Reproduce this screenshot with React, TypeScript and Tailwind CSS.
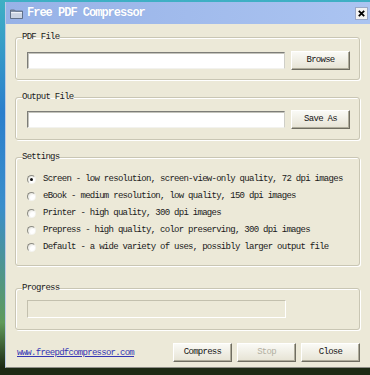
import React from "react";

const mono = "font-['Liberation_Mono',monospace]";

function Btn({ children, disabled, className }: { children: React.ReactNode; disabled?: boolean; className?: string }) {
  return (
    <button
      className={`block h-[19px] w-[59px] shrink-0 border border-t-[#ffffff] border-l-[#ffffff] border-r-[#6f6d61] border-b-[#6f6d61] bg-gradient-to-b from-[#fafaf6] to-[#e6e3d4] shadow-[inset_-1px_-1px_0_#aeab9a] text-[9px] leading-[17px] tracking-[-0.72px] ${mono} ${
        disabled ? "text-[#b3b0a2]" : "text-[#151515]"
      } ${className ?? ""}`}
    >
      {children}
    </button>
  );
}

function Group({ label, children, className }: { label: string; children: React.ReactNode; className?: string }) {
  return (
    <fieldset
      className={`w-[345px] border border-[#c9c6b4] rounded-[3px] shadow-[inset_1px_1px_0_#ffffff,1px_1px_0_#ffffff] ${className ?? ""}`}
    >
      <legend className={`ml-[6px] h-[12px] px-0 text-[9px] leading-[12px] tracking-[-0.72px] text-[#1a1a1a] ${mono}`}>
        {label}
      </legend>
      {children}
    </fieldset>
  );
}

function Radio({ label, checked }: { label: string; checked?: boolean }) {
  return (
    <div className="flex h-[17px] items-center">
      <span className="flex h-[9px] w-[9px] items-center justify-center rounded-full border border-t-[#8c8c84] border-l-[#8c8c84] border-r-[#f4f4f0] border-b-[#f4f4f0] bg-[radial-gradient(circle_at_70%_70%,#ffffff_35%,#d9d8ce_100%)]">
        {checked && <span className="h-[3px] w-[3px] rounded-full bg-[#111]" />}
      </span>
      <span className={`ml-[7px] whitespace-nowrap text-[9px] leading-[17px] tracking-[-0.72px] text-[#1a1a1a] ${mono}`}>
        {label}
      </span>
    </div>
  );
}

function Input() {
  return (
    <div className="h-[17px] w-[258px] shrink-0 border border-t-[#7d7d78] border-l-[#7d7d78] border-r-[#cfcfc8] border-b-[#f2f2ee] bg-white shadow-[inset_1px_1px_0_#c4c4bc]" />
  );
}

function FolderIcon() {
  return (
    <svg width="13" height="11" viewBox="0 0 13 11" className="block shrink-0">
      <path d="M0.5 2 H4.5 L5.5 3 H12.5 V10.5 H0.5 Z" fill="#7f8fa6" stroke="#56647a" strokeWidth="0.8" />
      <path d="M1 4 H12 V10 H1 Z" fill="#c9d3e2" />
      <path d="M1 4 H12 V5.2 H1 Z" fill="#eef2f8" />
    </svg>
  );
}

export default function App() {
  return (
    <div className="h-[375px] w-[370px] overflow-hidden bg-[linear-gradient(180deg,#3fb0c4_0%,#2b7fcc_30%,#3a8ecb_55%,#5f9a5a_86%,#1e2a14_98%)] pt-[2px]">
      <div className="ml-[5px] flex h-[366px] w-[365px] flex-col border-l border-l-[#bccbe6] border-b border-b-[#8e8d86] bg-[#ece9d8]">
        {/* Title bar */}
        <div className="flex h-[22px] shrink-0 items-center bg-gradient-to-r from-[#97b2e7] to-[#abc4f1] pl-[4px] pr-[2px]">
          <FolderIcon />
          <span className={`ml-[4px] text-[12px] font-bold leading-[22px] tracking-[-1px] text-white ${mono} [text-shadow:0_0_1px_#8aa3d6]`}>
            Free PDF Compressor
          </span>
          <span className="ml-auto flex h-[13px] w-[13px] items-center justify-center border border-[#9aa8c8] bg-[#f2f2f2]">
            <svg width="7" height="7" viewBox="0 0 7 7" className="block">
              <path d="M0.8 0.8 L6.2 6.2 M6.2 0.8 L0.8 6.2" stroke="#000" strokeWidth="1.8" />
            </svg>
          </span>
        </div>

        {/* Content */}
        <div className="flex flex-col pl-[9px] pt-[7px]">
          <Group label="PDF File">
            <div className="flex items-center pl-[11px] pt-[8px] pb-[9px]">
              <Input />
              <Btn className="ml-[6px]">Browse</Btn>
            </div>
          </Group>

          <Group label="Output File" className="mt-[11px]">
            <div className="flex items-center pl-[11px] pt-[7px] pb-[10px]">
              <Input />
              <Btn className="ml-[6px]">Save As</Btn>
            </div>
          </Group>

          <Group label="Settings" className="mt-[11px]">
            <div className="flex flex-col pl-[11px] pt-[8px] pb-[9px]">
              <Radio checked label="Screen - low resolution, screen-view-only quality, 72 dpi images" />
              <Radio label="eBook - medium resolution, low quality, 150 dpi images" />
              <Radio label="Printer - high quality, 300 dpi images" />
              <Radio label="Prepress - high quality, color preserving, 300 dpi images" />
              <Radio label="Default - a wide variety of uses, possibly larger output file" />
            </div>
          </Group>

          <Group label="Progress" className="mt-[16px]">
            <div className="flex pl-[11px] pt-[6px] pb-[11px]">
              <div className="h-[18px] w-[259px] border border-t-[#c3c0ae] border-l-[#c3c0ae] border-r-[#ffffff] border-b-[#ffffff] bg-[#ece9d8]" />
            </div>
          </Group>

          <div className="mt-[13px] flex w-[345px] items-center">
            <a className={`ml-[2px] text-[9px] leading-[12px] tracking-[-0.72px] text-[#3434b4] underline ${mono}`}>
              www.freepdfcompressor.com
            </a>
            <div className="ml-auto flex gap-[5px]">
              <Btn>Compress</Btn>
              <Btn disabled>Stop</Btn>
              <Btn>Close</Btn>
            </div>
          </div>
        </div>
      </div>
    </div>
  );
}
